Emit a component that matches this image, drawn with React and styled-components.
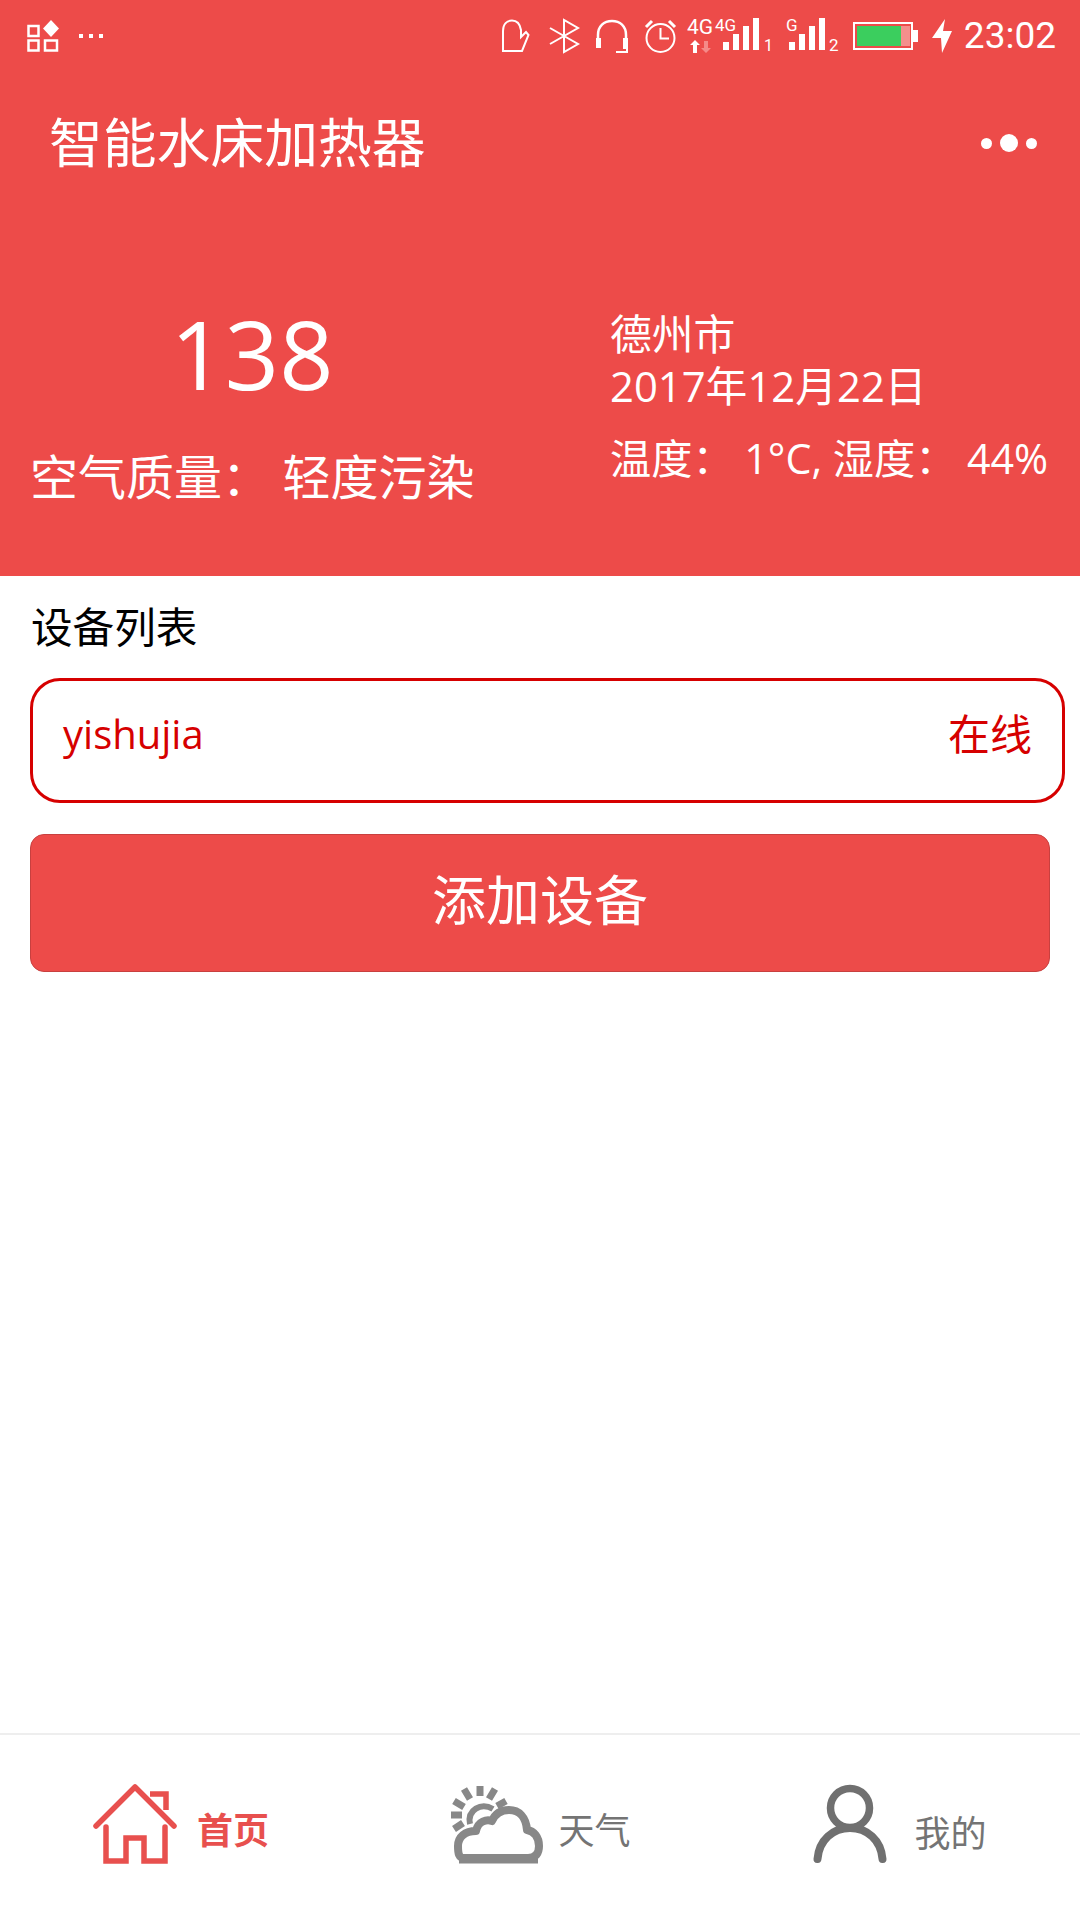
import React from "react";
import styled, { createGlobalStyle } from "styled-components";

const RED = "#ed4b49";
const DEEP_RED = "#d60000";
const FONT = `"Open Sans", "Noto Sans CJK SC", sans-serif`;

const GlobalStyle = createGlobalStyle`
  html, body {
    margin: 0;
    padding: 0;
    background: #fff;
  }
  * {
    box-sizing: border-box;
  }
`;

const Page = styled.div`
  width: 1080px;
  height: 1920px;
  display: flex;
  flex-direction: column;
  background: #fff;
  font-family: ${FONT};
  overflow: hidden;
`;

const Header = styled.header`
  height: 576px;
  background: ${RED};
  color: #fff;
`;

const StatusBar = styled.div`
  height: 72px;
  padding: 0 24px 0 27px;
  display: flex;
  align-items: center;
  justify-content: space-between;
`;

const StatusGroup = styled.div`
  display: flex;
  align-items: center;
`;

const StatusIcon = styled.svg`
  display: block;
  flex: none;
  overflow: visible;
  margin-left: ${(p) => p.$gap || 0}px;
`;

const StatusTime = styled.span`
  margin-left: 12px;
  font-family: Roboto, sans-serif;
  font-size: 37px;
  line-height: 44px;
`;

const NavBar = styled.div`
  height: 140px;
  padding: 0 43px 0 49px;
  display: flex;
  align-items: center;
  justify-content: space-between;
`;

const Title = styled.h1`
  margin: 0;
  font-size: 53.8px;
  font-weight: 400;
  line-height: 70px;
`;

const MoreButton = styled.div`
  display: flex;
  align-items: center;
  gap: 8px;
  margin-top: 2px;
`;

const Dot = styled.span`
  width: ${(p) => (p.$big ? 18 : 11)}px;
  height: ${(p) => (p.$big ? 18 : 11)}px;
  border-radius: 50%;
  background: #fff;
`;

const Weather = styled.section`
  display: grid;
  grid-template-columns: 578px 1fr;
  padding-top: 81px;
`;

const AirColumn = styled.div`
  padding-left: 32px;
  width: 472px;
  text-align: center;
`;

const AirValue = styled.div`
  font-size: 95px;
  line-height: 120px;
`;

const AirLabel = styled.div`
  margin: 34px 0 0 -2px;
  font-size: 48px;
  line-height: 60px;
  white-space: nowrap;
`;

const InfoColumn = styled.div`
  padding: 15px 0 0 32px;
`;

const InfoLine = styled.div`
  font-size: ${(p) => p.$size || 41.8}px;
  line-height: 52px;
  margin-top: ${(p) => p.$gap || 0}px;
  white-space: nowrap;
`;

const DeviceSection = styled.section`
  padding: 0 15px 0 30px;
`;

const SectionLabel = styled.div`
  padding: 25px 0 0 1px;
  font-size: 41.6px;
  line-height: 52px;
  color: #000;
`;

const DeviceCard = styled.div`
  height: 125px;
  margin-top: 25px;
  padding: 0 30px 18px 30px;
  border: 3px solid ${DEEP_RED};
  border-radius: 30px;
  display: flex;
  align-items: center;
  justify-content: space-between;
  color: ${DEEP_RED};
`;

const DeviceName = styled.span`
  font-size: 40px;
  padding-top: 4px;
`;

const DeviceState = styled.span`
  font-size: 42px;
`;

const AddButton = styled.button`
  display: block;
  width: 1020px;
  height: 138px;
  margin-top: 31px;
  padding: 0 0 12px;
  border: 1px solid #c8403f;
  border-radius: 14px;
  background: ${RED};
  color: #fff;
  font-family: ${FONT};
  font-size: 54px;
`;

const TabBar = styled.nav`
  margin-top: auto;
  height: 187px;
  padding-bottom: 7px;
  border-top: 2px solid #eeeeee;
  display: grid;
  grid-template-columns: repeat(3, 1fr);
`;

const Tab = styled.div`
  display: flex;
  align-items: center;
  justify-content: center;
  gap: ${(p) => p.$gap}px;
  color: ${(p) => (p.$active ? "#e8504e" : "#747474")};
`;

const TabLabel = styled.span`
  font-size: 36px;
  font-weight: ${(p) => (p.$active ? 700 : 400)};
  line-height: 44px;
  padding-top: ${(p) => p.$drop}px;
`;

const HouseIcon = () => (
  <svg width="88" height="80" viewBox="0 0 88 80" fill="none" stroke="#e8504e" strokeWidth="5.5">
    <path d="M5 42 L44 3 L83 42" strokeLinecap="round" strokeLinejoin="round" />
    <path d="M59 10 H75 V26" />
    <path d="M15 43 V77 H35 V54 H53 V77 H74 V43" strokeLinecap="round" />
  </svg>
);

const CloudIcon = () => (
  <svg width="94" height="80" viewBox="0 0 94 80" fill="none" stroke="#888888">
    <path d="M15 74 H79 C87 74 90 69 90 62 C90 53 85 47 78 46 C77 33 70 26 60 26 C52 26 46 30 43 37 C38 35 29 37 27 47 C16 47 9 53 9 62 C9 70 10 74 15 74 Z" strokeWidth="8" strokeLinejoin="round" />
    <path d="M10 76 H89" strokeWidth="7" />
    <path d="M21 40 C18 26 32 18 44 25" strokeWidth="6" />
    <path d="M31 2 V12 M15 5 L21 15 M46 5 L40 15 M5 17 L15 23 M57 17 L48 22 M2 31 H13 M5 45 L14 39" strokeWidth="7" />
  </svg>
);

const PersonIcon = () => (
  <svg width="74" height="80" viewBox="0 0 74 80" fill="none" stroke="#707070" strokeWidth="7.5">
    <circle cx="37" cy="24" r="19.5" />
    <path d="M4.5 75 C6 56 20 44 37 44 C54 44 68 56 69.5 75" strokeWidth="8" strokeLinecap="round" />
  </svg>
);

const StatusIcons = () => (
  <StatusGroup>
    <StatusIcon width="29" height="34" viewBox="0 0 29 34" fill="none" stroke="#fff" strokeWidth="2">
      <path d="M2 32 V12 C2 5 6 1.5 11 1.5 C16 1.5 19 5 20 11 V18 L25 13 L27.5 16 L21 32 Z" />
    </StatusIcon>
    <StatusIcon $gap={19} width="31" height="34" viewBox="0 0 31 34" fill="none" stroke="#fff" strokeWidth="2">
      <path d="M1 9 L29 25 L15 33 V1 L29 9 L1 25" />
    </StatusIcon>
    <StatusIcon $gap={15} width="34" height="34" viewBox="0 0 34 34" fill="none" stroke="#fff" strokeWidth="2.5">
      <path d="M3 20 V16 C3 7 9 2 17 2 C25 2 31 7 31 16 V20" />
      <path d="M1 19 H6 V29 H1 Z M28 19 H33 V30 H28 Z" fill="#fff" stroke="none" />
      <path d="M32 30 V33 H21" strokeWidth="2" />
    </StatusIcon>
    <StatusIcon $gap={15} width="33" height="34" viewBox="0 0 33 34" fill="none" stroke="#fff" strokeWidth="2">
      <circle cx="16.5" cy="19" r="14" />
      <path d="M16.5 9 V19.5 H25" />
      <path d="M2 8 L8 2 M31 8 L25 2" strokeWidth="3" />
    </StatusIcon>
    <StatusIcon $gap={10} width="84" height="36" viewBox="0 0 84 36" fill="#fff">
      <text x="0" y="16" fontFamily="Roboto, sans-serif" fontSize="21">4G</text>
      <text x="28" y="13" fontFamily="Roboto, sans-serif" fontSize="17">4G</text>
      <path d="M6 35 V27 H3 L8 22 L13 27 H10 V35 Z" />
      <path d="M17 23 V30 H14 L19 35 L24 30 H21 V23 Z" fill="#f58a88" />
      <path d="M36 24 h6 v8 h-6 Z M46 16 h6 v16 h-6 Z M56 8 h6 v24 h-6 Z M66 0 h6 v32 h-6 Z" />
      <text x="77" y="33" fontFamily="Roboto, sans-serif" fontSize="16">1</text>
    </StatusIcon>
    <StatusIcon $gap={15} width="53" height="36" viewBox="0 0 53 36" fill="#fff">
      <text x="0" y="13" fontFamily="Roboto, sans-serif" fontSize="17">G</text>
      <path d="M3 24 h6 v8 h-6 Z M13 16 h6 v16 h-6 Z M23 8 h6 v24 h-6 Z M33 0 h6 v32 h-6 Z" />
      <text x="43" y="33" fontFamily="Roboto, sans-serif" fontSize="17">2</text>
    </StatusIcon>
    <StatusIcon $gap={14} width="65" height="28" viewBox="0 0 65 28">
      <rect x="1" y="1" width="58" height="26" fill="none" stroke="#fff" strokeWidth="2" />
      <rect x="4" y="4" width="44" height="20" fill="#3bce5e" />
      <rect x="48" y="4" width="9" height="20" fill="#f48f8c" />
      <rect x="59" y="8" width="6" height="12" fill="#fff" />
    </StatusIcon>
    <StatusIcon $gap={14} width="20" height="34" viewBox="0 0 20 34" fill="#fff">
      <path d="M13 0 L0 19 H9 L10 34 L20 12 H11 Z" />
    </StatusIcon>
    <StatusTime>23:02</StatusTime>
  </StatusGroup>
);

const App = () => {
  return (
    <Page>
      <GlobalStyle />
      <Header>
        <StatusBar>
          <StatusGroup>
            <StatusIcon width="32" height="32" viewBox="0 0 32 32" fill="none" stroke="#fff" strokeWidth="2.5">
              <rect x="1.5" y="6" width="10" height="10" />
              <rect x="1.5" y="20.5" width="10" height="10" />
              <rect x="18" y="20.5" width="12" height="10" />
              <path d="M24 0 L32 8.5 L24 17 L16 8.5 Z" fill="#fff" stroke="none" />
            </StatusIcon>
            <StatusIcon $gap={20} width="24" height="6" viewBox="0 0 24 6" fill="#fff">
              <rect x="0" y="1" width="4" height="4" />
              <rect x="10" y="1" width="4" height="4" />
              <rect x="20" y="1" width="4" height="4" />
            </StatusIcon>
          </StatusGroup>
          <StatusIcons />
        </StatusBar>
        <NavBar>
          <Title>智能水床加热器</Title>
          <MoreButton>
            <Dot />
            <Dot $big />
            <Dot />
          </MoreButton>
        </NavBar>
        <Weather>
          <AirColumn>
            <AirValue>138</AirValue>
            <AirLabel>空气质量： 轻度污染</AirLabel>
          </AirColumn>
          <InfoColumn>
            <InfoLine>德州市</InfoLine>
            <InfoLine>2017年12月22日</InfoLine>
            <InfoLine $gap={20} $size={41.2}>温度： 1°C, 湿度： 44%</InfoLine>
          </InfoColumn>
        </Weather>
      </Header>
      <DeviceSection>
        <SectionLabel>设备列表</SectionLabel>
        <DeviceCard>
          <DeviceName>yishujia</DeviceName>
          <DeviceState>在线</DeviceState>
        </DeviceCard>
        <AddButton>添加设备</AddButton>
      </DeviceSection>
      <TabBar>
        <Tab $active $gap={18}>
          <HouseIcon />
          <TabLabel $active $drop={13}>首页</TabLabel>
        </Tab>
        <Tab $gap={15}>
          <CloudIcon />
          <TabLabel $drop={13}>天气</TabLabel>
        </Tab>
        <Tab $gap={27}>
          <PersonIcon />
          <TabLabel $drop={19}>我的</TabLabel>
        </Tab>
      </TabBar>
    </Page>
  );
};

export default App;
